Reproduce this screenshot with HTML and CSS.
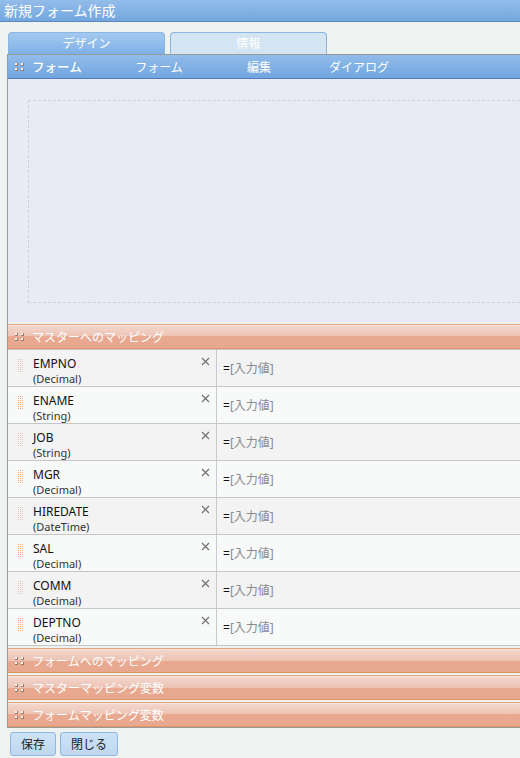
FILE: index.html
```html
<!DOCTYPE html>
<html lang="ja">
<head>
    <meta charset="UTF-8">
    <title>新規フォーム作成</title>
    <link rel="stylesheet" href="styles.css">
</head>
<body>
    <div class="titlebar">新規フォーム作成</div>

    <div class="tabs">
        <div class="tab active">デザイン</div>
        <div class="tab">情報</div>
    </div>

    <div class="panel">
        <!-- form toolbar -->
        <div class="toolbar">
            <svg class="grip" width="9" height="8" viewBox="0 0 9 8">
                <rect x="0" y="0" width="3" height="3" fill="#9c7a68"/><rect x="0" y="0" width="2" height="2" fill="#f6f2ee"/>
                <rect x="6" y="0" width="3" height="3" fill="#9c7a68"/><rect x="6" y="0" width="2" height="2" fill="#f6f2ee"/>
                <rect x="0" y="5" width="3" height="3" fill="#9c7a68"/><rect x="0" y="5" width="2" height="2" fill="#f6f2ee"/>
                <rect x="6" y="5" width="3" height="3" fill="#9c7a68"/><rect x="6" y="5" width="2" height="2" fill="#f6f2ee"/>
            </svg>
            <span class="toolbar-title">フォーム</span>
            <span class="menu">フォーム</span>
            <span class="menu">編集</span>
            <span class="menu">ダイアログ</span>
        </div>

        <div class="canvas">
            <div class="dropzone"></div>
        </div>

        <!-- master mapping -->
        <div class="section-head">
            <svg class="grip" width="9" height="8" viewBox="0 0 9 8">
                <rect x="0" y="0" width="3" height="3" fill="#9c7a68"/><rect x="0" y="0" width="2" height="2" fill="#f6f2ee"/>
                <rect x="6" y="0" width="3" height="3" fill="#9c7a68"/><rect x="6" y="0" width="2" height="2" fill="#f6f2ee"/>
                <rect x="0" y="5" width="3" height="3" fill="#9c7a68"/><rect x="0" y="5" width="2" height="2" fill="#f6f2ee"/>
                <rect x="6" y="5" width="3" height="3" fill="#9c7a68"/><rect x="6" y="5" width="2" height="2" fill="#f6f2ee"/>
            </svg>
            マスターへのマッピング
        </div>

        <div class="map-list">
            <div class="map-row odd">
                <div class="field">
                    <span class="drag"></span>
                    <div class="field-name"><span>EMPNO</span><small>(Decimal)</small></div>
                    <svg class="remove" width="9" height="9" viewBox="0 0 9 9"><path d="M1 1L8 8M8 1L1 8" stroke="#707070" stroke-width="1.2"/></svg>
                </div>
                <div class="value">=<span>[入力値]</span></div>
            </div>
            <div class="map-row even">
                <div class="field">
                    <span class="drag"></span>
                    <div class="field-name"><span>ENAME</span><small>(String)</small></div>
                    <svg class="remove" width="9" height="9" viewBox="0 0 9 9"><path d="M1 1L8 8M8 1L1 8" stroke="#707070" stroke-width="1.2"/></svg>
                </div>
                <div class="value">=<span>[入力値]</span></div>
            </div>
            <div class="map-row odd">
                <div class="field">
                    <span class="drag"></span>
                    <div class="field-name"><span>JOB</span><small>(String)</small></div>
                    <svg class="remove" width="9" height="9" viewBox="0 0 9 9"><path d="M1 1L8 8M8 1L1 8" stroke="#707070" stroke-width="1.2"/></svg>
                </div>
                <div class="value">=<span>[入力値]</span></div>
            </div>
            <div class="map-row even">
                <div class="field">
                    <span class="drag"></span>
                    <div class="field-name"><span>MGR</span><small>(Decimal)</small></div>
                    <svg class="remove" width="9" height="9" viewBox="0 0 9 9"><path d="M1 1L8 8M8 1L1 8" stroke="#707070" stroke-width="1.2"/></svg>
                </div>
                <div class="value">=<span>[入力値]</span></div>
            </div>
            <div class="map-row odd">
                <div class="field">
                    <span class="drag"></span>
                    <div class="field-name"><span>HIREDATE</span><small>(DateTime)</small></div>
                    <svg class="remove" width="9" height="9" viewBox="0 0 9 9"><path d="M1 1L8 8M8 1L1 8" stroke="#707070" stroke-width="1.2"/></svg>
                </div>
                <div class="value">=<span>[入力値]</span></div>
            </div>
            <div class="map-row even">
                <div class="field">
                    <span class="drag"></span>
                    <div class="field-name"><span>SAL</span><small>(Decimal)</small></div>
                    <svg class="remove" width="9" height="9" viewBox="0 0 9 9"><path d="M1 1L8 8M8 1L1 8" stroke="#707070" stroke-width="1.2"/></svg>
                </div>
                <div class="value">=<span>[入力値]</span></div>
            </div>
            <div class="map-row odd">
                <div class="field">
                    <span class="drag"></span>
                    <div class="field-name"><span>COMM</span><small>(Decimal)</small></div>
                    <svg class="remove" width="9" height="9" viewBox="0 0 9 9"><path d="M1 1L8 8M8 1L1 8" stroke="#707070" stroke-width="1.2"/></svg>
                </div>
                <div class="value">=<span>[入力値]</span></div>
            </div>
            <div class="map-row even">
                <div class="field">
                    <span class="drag"></span>
                    <div class="field-name"><span>DEPTNO</span><small>(Decimal)</small></div>
                    <svg class="remove" width="9" height="9" viewBox="0 0 9 9"><path d="M1 1L8 8M8 1L1 8" stroke="#707070" stroke-width="1.2"/></svg>
                </div>
                <div class="value">=<span>[入力値]</span></div>
            </div>
        </div>

        <!-- collapsed sections -->
        <div class="section-head">
            <svg class="grip" width="9" height="8" viewBox="0 0 9 8">
                <rect x="0" y="0" width="3" height="3" fill="#9c7a68"/><rect x="0" y="0" width="2" height="2" fill="#f6f2ee"/>
                <rect x="6" y="0" width="3" height="3" fill="#9c7a68"/><rect x="6" y="0" width="2" height="2" fill="#f6f2ee"/>
                <rect x="0" y="5" width="3" height="3" fill="#9c7a68"/><rect x="0" y="5" width="2" height="2" fill="#f6f2ee"/>
                <rect x="6" y="5" width="3" height="3" fill="#9c7a68"/><rect x="6" y="5" width="2" height="2" fill="#f6f2ee"/>
            </svg>
            フォームへのマッピング
        </div>
        <div class="section-head">
            <svg class="grip" width="9" height="8" viewBox="0 0 9 8">
                <rect x="0" y="0" width="3" height="3" fill="#9c7a68"/><rect x="0" y="0" width="2" height="2" fill="#f6f2ee"/>
                <rect x="6" y="0" width="3" height="3" fill="#9c7a68"/><rect x="6" y="0" width="2" height="2" fill="#f6f2ee"/>
                <rect x="0" y="5" width="3" height="3" fill="#9c7a68"/><rect x="0" y="5" width="2" height="2" fill="#f6f2ee"/>
                <rect x="6" y="5" width="3" height="3" fill="#9c7a68"/><rect x="6" y="5" width="2" height="2" fill="#f6f2ee"/>
            </svg>
            マスターマッピング変数
        </div>
        <div class="section-head">
            <svg class="grip" width="9" height="8" viewBox="0 0 9 8">
                <rect x="0" y="0" width="3" height="3" fill="#9c7a68"/><rect x="0" y="0" width="2" height="2" fill="#f6f2ee"/>
                <rect x="6" y="0" width="3" height="3" fill="#9c7a68"/><rect x="6" y="0" width="2" height="2" fill="#f6f2ee"/>
                <rect x="0" y="5" width="3" height="3" fill="#9c7a68"/><rect x="0" y="5" width="2" height="2" fill="#f6f2ee"/>
                <rect x="6" y="5" width="3" height="3" fill="#9c7a68"/><rect x="6" y="5" width="2" height="2" fill="#f6f2ee"/>
            </svg>
            フォームマッピング変数
        </div>
    </div>

    <div class="actions">
        <button class="btn">保存</button>
        <button class="btn">閉じる</button>
    </div>
</body>
</html>
```

FILE: styles.css
```css
body {
    margin: 0;
    padding: 0;
    background-color: #eef3f1;
    font-family: "Noto Sans", "Noto Sans CJK JP", sans-serif;
    font-size: 12px;
    color: #222;
    overflow: hidden;
}

.titlebar {
    height: 21px;
    line-height: 21px;
    padding-left: 4px;
    font-size: 14px;
    color: white;
    background: linear-gradient(#93bdea, #73a6df);
    border-bottom: 1px solid #5b88bd;
}

/* tabs */
.tabs {
    display: flex;
    gap: 5px;
    margin-top: 10px;
    padding-left: 8px;
}

.tab {
    width: 155px;
    height: 21px;
    line-height: 22px;
    text-align: center;
    color: white;
    background-color: #d3e4f3;
    border: 1px solid #8cb6e2;
    border-bottom: none;
    border-radius: 4px 4px 0 0;
}

.tab.active {
    background: linear-gradient(#a4c9f0, #7eb0e6);
}

/* main panel */
.panel {
    margin-left: 7px;
    border-left: 1px solid #999;
    border-top: 1px solid #999;
    border-bottom: 1px solid #9a9a9a;
}

.toolbar {
    display: flex;
    align-items: center;
    height: 23px;
    background: linear-gradient(#91bcea, #72a6df);
    border-bottom: 1px solid #4f7db6;
    color: white;
}

.grip {
    margin: 0 8px 0 7px;
    flex-shrink: 0;
}

.toolbar-title {
    width: 77px;
    font-weight: 500;
    font-size: 12.5px;
}

.menu {
    width: 100px;
    text-align: center;
}

.canvas {
    height: 243px;
    padding: 21px 0 21px 20px;
    box-sizing: border-box;
    background-color: #e8eaf6;
}

.dropzone {
    height: 100%;
    border: 1px dashed #cdd0dc;
    border-right: none;
}

/* orange section bars */
.section-head {
    display: flex;
    align-items: center;
    height: 23px;
    margin-top: 2px;
    color: white;
    border-top: 1px solid #e6a47e;
    border-bottom: 1px solid #de9562;
    box-shadow: inset 0 1px 0 #f7e4dc;
    background: linear-gradient(#f3d8cf, #edc3b3 50%, #e8a990 50%, #e8a88f);
}

.panel > .section-head:first-of-type {
    margin-top: 1px;
}

.map-list {
    border-top: 1px solid #c8c8c8;
}

.map-row {
    display: flex;
    height: 36px;
    border-bottom: 1px solid #c6c6c6;
}

.map-row.odd {
    --row-bg: #f2f3f2;
    --dot: #e2c8bc;
    background-color: var(--row-bg);
}

.map-row.even {
    --row-bg: #f8faf9;
    --dot: #f3a684;
    background-color: var(--row-bg);
}

.field {
    display: flex;
    width: 209px;
    border-right: 1px solid #cacaca;
    box-sizing: border-box;
}

.drag {
    width: 7px;
    height: 14px;
    margin: 8px 9px 0 9px;
    background:
        linear-gradient(90deg, var(--row-bg) 1px, transparent 1px) 0 0 / 2px 2px,
        linear-gradient(var(--row-bg) 1px, transparent 1px) 0 0 / 2px 2px,
        var(--dot);
}

.field-name {
    flex: 1;
    display: flex;
    flex-direction: column;
    padding-top: 6px;
    color: #111;
}

.field-name span {
    line-height: 16px;
}

.field-name small {
    font-size: 11px;
    line-height: 13px;
    color: #333;
}

.remove {
    margin: 7px 6px 0 0;
}

.value {
    display: flex;
    align-items: center;
    padding-left: 6px;
    color: #111;
}

.value span {
    color: #8a8a8a;
}

/* bottom buttons */
.actions {
    display: flex;
    gap: 4px;
    padding: 4px 0 0 10px;
}

.btn {
    height: 24px;
    padding: 0 10px;
    font-family: inherit;
    font-size: 12px;
    color: #222;
    background: linear-gradient(#cde2f5, #bfd8f0);
    border: 1px solid #8fb7e1;
    border-radius: 3px;
}
```
